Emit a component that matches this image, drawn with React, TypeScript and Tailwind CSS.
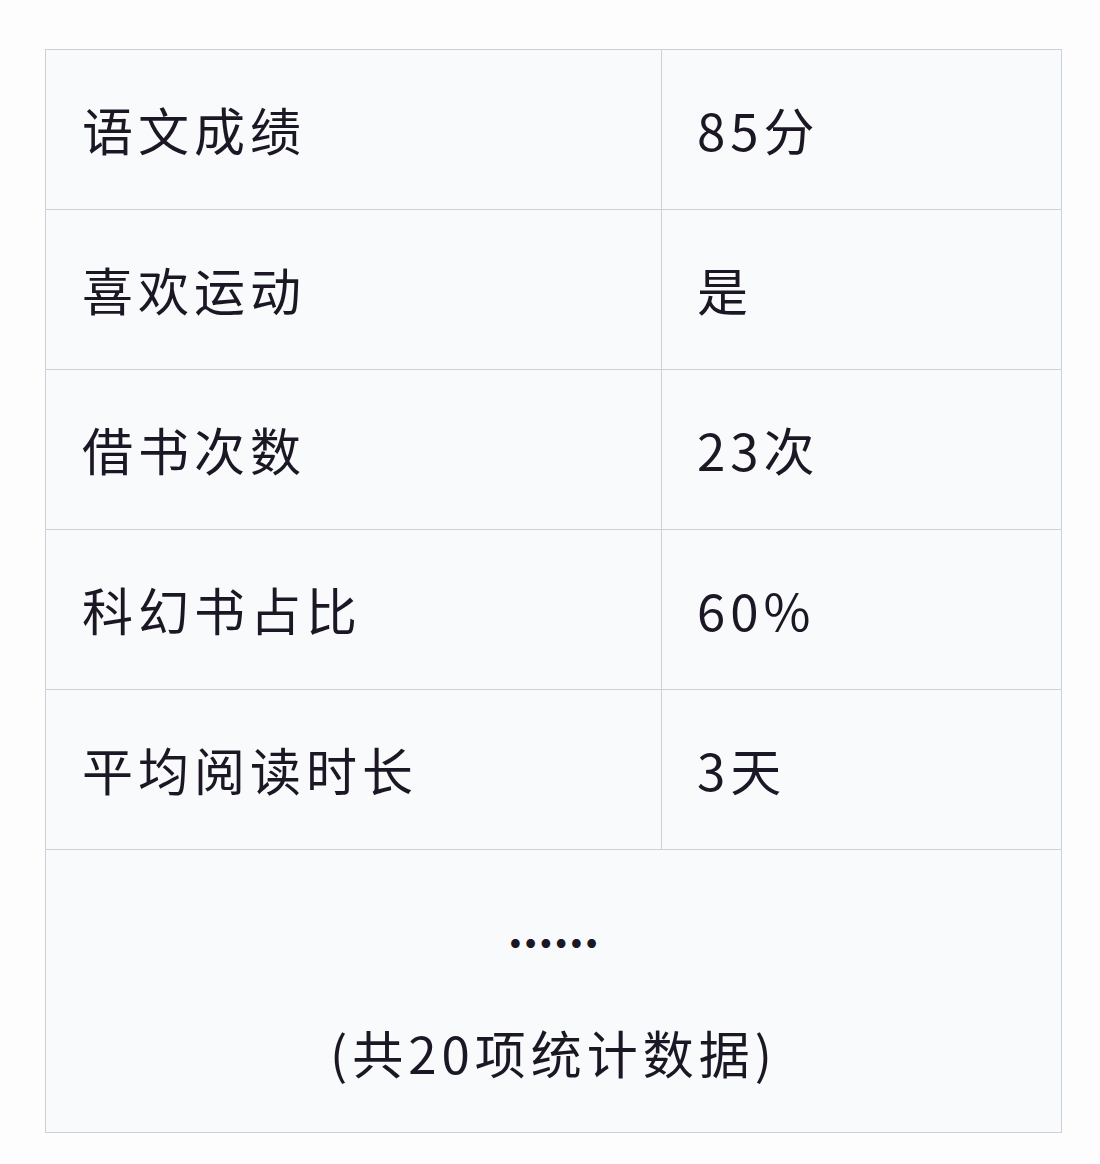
const rows: [string, string][] = [
  ["语文成绩", "85分"],
  ["喜欢运动", "是"],
  ["借书次数", "23次"],
  ["科幻书占比", "60%"],
  ["平均阅读时长", "3天"],
];

export default function App() {
  return (
    <div
      className="w-[1100px] h-[1164px] bg-[#fdfdfe] pt-[49px] pl-[45px] text-[#1c1724]"
      style={{ fontFamily: '"Noto Sans CJK SC", "Noto Sans", sans-serif' }}
    >
      <div className="w-[1017px] border border-[#cdd0d6] bg-[#f9fafc]">
        {rows.map(([label, value]) => (
          <div key={label} className="flex h-[160px] border-b border-[#cdd0d6]">
            <div className="w-[616px] flex items-center pl-[36px] border-r border-[#cdd0d6] text-[51px] tracking-[5px]">
              {label}
            </div>
            <div className="flex-1 flex items-center pl-[35px] text-[51px] tracking-[5px]">
              {value}
            </div>
          </div>
        ))}
        <div className="h-[282px] flex flex-col items-center text-[51px] tracking-[4px]">
          <div className="mt-[42px] leading-[70px] tracking-[0px] font-semibold text-[47px]">......</div>
          <div className="mt-[55px] leading-[70px] tracking-[5px]">(共20项统计数据)</div>
        </div>
      </div>
    </div>
  );
}
